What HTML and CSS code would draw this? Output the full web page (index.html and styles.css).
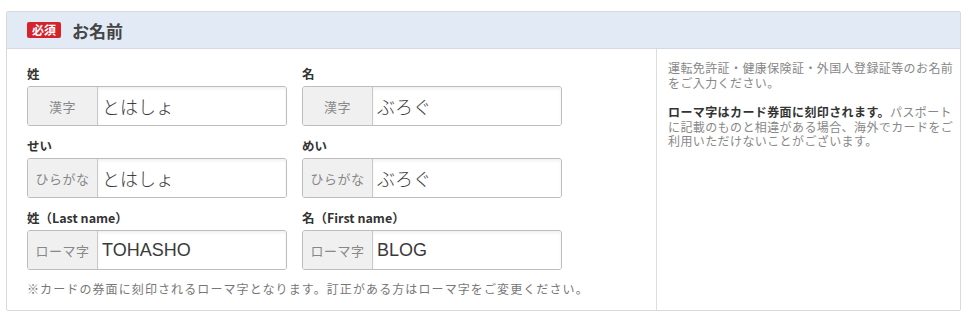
FILE: index.html
```html
<!DOCTYPE html>
<html>
<head>
    <title>お名前</title>
    <link rel="stylesheet" href="styles.css">
</head>
<body>
    <div class="form-box">
        <div class="form-head">
            <span class="badge">必須</span>
            <span class="form-title">お名前</span>
        </div>
        <div class="form-body">
            <div class="fields">
                <div class="field-row">
                    <div class="field">
                        <label>姓</label>
                        <div class="input-group">
                            <span class="addon">漢字</span>
                            <input type="text" value="とはしょ">
                        </div>
                    </div>
                    <div class="field">
                        <label>名</label>
                        <div class="input-group">
                            <span class="addon">漢字</span>
                            <input type="text" value="ぶろぐ">
                        </div>
                    </div>
                </div>
                <div class="field-row">
                    <div class="field">
                        <label>せい</label>
                        <div class="input-group">
                            <span class="addon">ひらがな</span>
                            <input type="text" value="とはしょ">
                        </div>
                    </div>
                    <div class="field">
                        <label>めい</label>
                        <div class="input-group">
                            <span class="addon">ひらがな</span>
                            <input type="text" value="ぶろぐ">
                        </div>
                    </div>
                </div>
                <div class="field-row">
                    <div class="field">
                        <label>姓（Last name）</label>
                        <div class="input-group">
                            <span class="addon">ローマ字</span>
                            <input type="text" value="TOHASHO">
                        </div>
                    </div>
                    <div class="field">
                        <label>名（First name）</label>
                        <div class="input-group">
                            <span class="addon">ローマ字</span>
                            <input type="text" value="BLOG">
                        </div>
                    </div>
                </div>
                <p class="note">※カードの券面に刻印されるローマ字となります。訂正がある方はローマ字をご変更ください。</p>
            </div>
            <div class="help">
                <p>運転免許証・健康保険証・外国人登録証等のお名前をご入力ください。</p>
                <p><strong>ローマ字はカード券面に刻印されます。</strong>パスポートに記載のものと相違がある場合、海外でカードをご利用いただけないことがございます。</p>
            </div>
        </div>
    </div>
</body>
</html>
```

FILE: styles.css
```css
body {
    margin: 0;
    background-color: white;
    font-family: "Noto Sans CJK JP", "Noto Sans", sans-serif;
    color: #333;
}

.form-box {
    width: 953px;
    margin: 11px 0 0 6px;
    border: 1px solid #d9d9d9;
    border-radius: 2px;
}

.form-head {
    display: flex;
    align-items: center;
    gap: 11px;
    height: 36px;
    padding-left: 20px;
    background-color: #e2eaf5;
    border-bottom: 1px solid #d3dae3;
}

.badge {
    width: 34px;
    height: 16px;
    line-height: 16px;
    text-align: center;
    font-size: 12px;
    font-weight: bold;
    color: white;
    background-color: #d4232b;
    border-radius: 2px;
}

.form-title {
    font-size: 17px;
    font-weight: bold;
    color: #444;
}

.form-body {
    display: flex;
}

.fields {
    width: 609px;
    padding: 17px 20px 13px 20px;
    border-right: 1px solid #ddd;
}

.field-row {
    display: flex;
    gap: 15px;
    margin-bottom: 12px;
}

.field {
    width: 260px;
}

.field label {
    display: block;
    height: 16px;
    line-height: 16px;
    margin-bottom: 4px;
    font-size: 12.5px;
    font-weight: bold;
    color: #333;
}

.input-group {
    display: flex;
    height: 38px;
    border: 1px solid #bdbdbd;
    border-radius: 3px;
    overflow: hidden;
    box-shadow: inset 0 1px 2px rgba(0, 0, 0, 0.08);
}

.addon {
    width: 69px;
    flex-shrink: 0;
    display: flex;
    align-items: center;
    justify-content: center;
    font-size: 13px;
    letter-spacing: 0.5px;
    color: #888;
    background-color: #f0f0f0;
    border-right: 1px solid #c8c8c8;
}

.input-group input {
    flex: 1;
    min-width: 0;
    border: none;
    margin: 0;
    padding: 0 4px;
    font-family: "Liberation Sans", "Noto Sans CJK JP", sans-serif;
    font-size: 18px;
    font-weight: 300;
    color: #3a3a3a;
    background-color: white;
    box-shadow: inset 0 2px 3px rgba(0, 0, 0, 0.06);
    outline: none;
}

.note {
    margin: 0;
    margin-top: -1px;
    font-size: 12px;
    letter-spacing: 1.1px;
    line-height: 16px;
    color: #777;
}

.help {
    flex: 1;
    padding: 12px 6px 12px 11px;
    font-size: 12px;
    letter-spacing: 0.4px;
    line-height: 14.5px;
    color: #888;
}

.help p {
    margin: 0 0 15px 0;
}

.help strong {
    color: #333;
}
```
